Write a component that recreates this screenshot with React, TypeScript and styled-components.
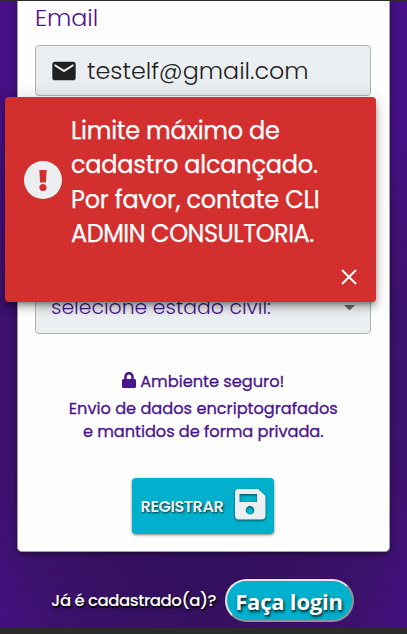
import React from "react";
import styled, { createGlobalStyle } from "styled-components";

const Global = createGlobalStyle`
  * { box-sizing: border-box; }
  body { margin: 0; overflow: hidden; }
  #root { font-family: Poppins, Inter, "Open Sans", sans-serif; }
`;

const Page = styled.main`
  position: relative;
  width: 407px;
  height: 634px;
  overflow: hidden;
  border-top: 1px solid #2b2b2b;
  border-bottom: 6px solid #2b2b2b;
  background: radial-gradient(ellipse 250px 420px at 50% 62%, #2c1052 0%, #34105f 50%, #3c116c 80%, #451083 100%);
`;

const Card = styled.section`
  width: 372.5px;
  height: 551px;
  margin-left: 17px;
  padding: 0 17px;
  background: #fefefe;
  border: 1px solid #a5a0ad;
  border-top: 0;
  border-radius: 0 0 5px 5px;
  box-shadow: 0 2px 5px rgba(0, 0, 0, 0.45);
`;

const Line = styled.span<{ $spacing?: number }>`
  display: block;
  white-space: nowrap;
  letter-spacing: ${({ $spacing = 0 }) => $spacing}px;
`;

const Label = styled.label`
  display: block;
  height: 44px;
  color: #4a148c;
  font-size: 23.8px;
  font-weight: 300;
  line-height: 34px;
`;

const Field = styled.div`
  display: flex;
  align-items: center;
  width: 336px;
  height: 51px;
  padding: 0 15px;
  border: 1px solid #aeb3b6;
  border-radius: 4px;
  background: linear-gradient(#eceff1 65%, #e7eaec);
  color: #212121;
  font-size: 23.8px;
  font-weight: 300;
`;

const MailIcon = styled.svg`
  width: 28px;
  height: 28px;
  margin: 0 9px 0 -1px;
  flex: none;
`;

const SelectField = styled(Field)`
  margin-top: 187px;
  justify-content: space-between;
  padding-bottom: 3px;
  background: #eceff1;
  color: #4a148c;
  font-size: 20.4px;
`;

const Arrow = styled.svg`
  width: 11px;
  height: 6px;
  margin-top: 2px;
`;

const Notice = styled.div`
  display: flex;
  flex-direction: column;
  align-items: center;
  margin-top: 34px;
  color: #4a148c;
  font-size: 16.2px;
  font-weight: 400;
  -webkit-text-stroke: 0.3px currentColor;
  line-height: 23px;
`;

const NoticeTitle = styled.div`
  display: flex;
  align-items: center;
  gap: 4px;
  height: 29px;
  padding-bottom: 3px;
`;

const LockIcon = styled.svg`
  width: 14px;
  height: 16px;
  margin-top: -2px;
`;

const RegisterButton = styled.button`
  display: flex;
  align-items: center;
  justify-content: space-between;
  width: 142.5px;
  height: 56px;
  margin: 35px 0 0 96.5px;
  padding: 0 6px 0 9px;
  border: 0;
  border-radius: 4px;
  background: #00b0cc;
  color: #eceff1;
  font: inherit;
  font-size: 16.2px;
  font-weight: 600;
  text-shadow: 1px 1px 2px rgba(0, 0, 0, 0.7);
  box-shadow: 0 1px 3px rgba(0, 0, 0, 0.5);
`;

const SaveIcon = styled.svg`
  width: 36px;
  height: 36px;
  margin-top: -4px;
  filter: drop-shadow(0 1px 1px rgba(0, 0, 0, 0.6));
`;

const Footer = styled.footer`
  display: flex;
  align-items: center;
  height: 43px;
  margin-top: 27px;
  padding-left: 51px;
  color: #fff;
  font-size: 16.6px;
  font-weight: 500;
  text-shadow: 1px 2px 2px #000;
`;

const Question = styled.div`
  width: 173.5px;
`;

const LoginButton = styled.button`
  display: flex;
  align-items: center;
  justify-content: center;
  width: 129px;
  height: 43px;
  padding: 0;
  border: 2px outset #e8e4ea;
  border-radius: 22px;
  background: #00b0cc;
  color: #fff;
  font-family: "Segoe UI", "Open Sans", "Noto Sans", sans-serif;
  font-size: 22px;
  font-weight: 700;
  text-shadow: 1px 2px 3px rgba(0, 0, 0, 0.85);
`;

const Toast = styled.div`
  position: absolute;
  left: 5px;
  top: 96px;
  display: grid;
  grid-template-columns: 38px 1fr;
  column-gap: 10px;
  width: 371px;
  height: 205px;
  padding: 17px 18px 0;
  border-radius: 4px;
  background: #d32f2f;
  color: #fff;
  font-size: 24px;
  font-weight: 400;
  -webkit-text-stroke: 0.25px currentColor;
  line-height: 34.3px;
  box-shadow: 0 3px 5px -1px rgba(0, 0, 0, 0.35), 0 6px 10px rgba(0, 0, 0, 0.2), 0 1px 18px rgba(0, 0, 0, 0.12);
`;

const AlertIcon = styled.svg`
  width: 38px;
  height: 38px;
  margin: 47px 0 0 0.5px;
`;

const CloseButton = styled.button`
  grid-column: 2;
  justify-self: end;
  align-self: start;
  width: 18px;
  height: 18px;
  margin-top: 1px;
  padding: 1px;
  border: 0;
  background: none;
  line-height: 0;
`;

export default function App() {
  return (
    <>
      <Global />
      <Page>
        <Card>
          <Label><Line>Email</Line></Label>
          <Field>
            <MailIcon viewBox="0 0 24 24">
              <path fill="#212121" d="M20 4H4c-1.1 0-2 .9-2 2v12c0 1.1.9 2 2 2h16c1.1 0 2-.9 2-2V6c0-1.1-.9-2-2-2zm0 4-8 5-8-5V6l8 5 8-5z" />
            </MailIcon>
            <Line>testelf@gmail.com</Line>
          </Field>
          <SelectField>
            <Line>selecione estado civil:</Line>
            <Arrow viewBox="0 0 11 6"><path fill="#666a6d" d="M0 0h11L5.5 5.5z" /></Arrow>
          </SelectField>
          <Notice>
            <NoticeTitle>
              <LockIcon viewBox="0 0 448 512">
                <path fill="#4a148c" d="M400 224h-24v-72C376 68.2 307.8 0 224 0S72 68.2 72 152v72H48c-26.500 0-48 21.500-48 48v192c0 26.500 21.500 48 48 48h352c26.500 0 48-21.500 48-48V272c0-26.500-21.500-48-48-48zm-104 0H152v-72c0-39.700 32.300-72 72-72s72 32.300 72 72z" />
              </LockIcon>
              <Line>Ambiente seguro!</Line>
            </NoticeTitle>
            <Line>Envio de dados encriptografados</Line>
            <Line $spacing={-0.03}>e mantidos de forma privada.</Line>
          </Notice>
          <RegisterButton>
            <Line $spacing={-0.5}>REGISTRAR</Line>
            <SaveIcon viewBox="0 0 36 36">
              <path fill="#eceff1" fillRule="evenodd" d="M6.500 3H26l7.500 7v19q0 4.500-4 4.500h-23q-3.500 0-3.500-4V6.500Q3 3 6.500 3zM7.500 8v8H25V8zM18 20a4.300 4.300 0 1 0 0 8.600 4.300 4.300 0 0 0 0-8.600z" />
            </SaveIcon>
          </RegisterButton>
        </Card>
        <Footer>
          <Question><Line $spacing={-0.48}>Já é cadastrado(a)?</Line></Question>
          <LoginButton><Line $spacing={-0.2}>Faça login</Line></LoginButton>
        </Footer>
        <Toast role="alert">
          <AlertIcon viewBox="0 0 38 38">
            <circle cx="19" cy="19" r="19" fill="#eceff1" />
            <path fill="#d32f2f" d="M15.300 9h7.400l-.8 12.500h-5.800z" />
            <circle cx="19" cy="26.500" r="3.600" fill="#d32f2f" />
          </AlertIcon>
          <div>
            <Line $spacing={-0.27}>Limite máximo de</Line>
            <Line $spacing={-0.22}>cadastro alcançado.</Line>
            <Line $spacing={-0.2}>Por favor, contate CLI</Line>
            <Line $spacing={-0.48}>ADMIN CONSULTORIA.</Line>
          </div>
          <CloseButton aria-label="Fechar">
            <svg width="16" height="16" viewBox="0 0 16 16"><path d="M1 1l14 14M15 1L1 15" stroke="#fff" strokeWidth="2" /></svg>
          </CloseButton>
        </Toast>
      </Page>
    </>
  );
}
